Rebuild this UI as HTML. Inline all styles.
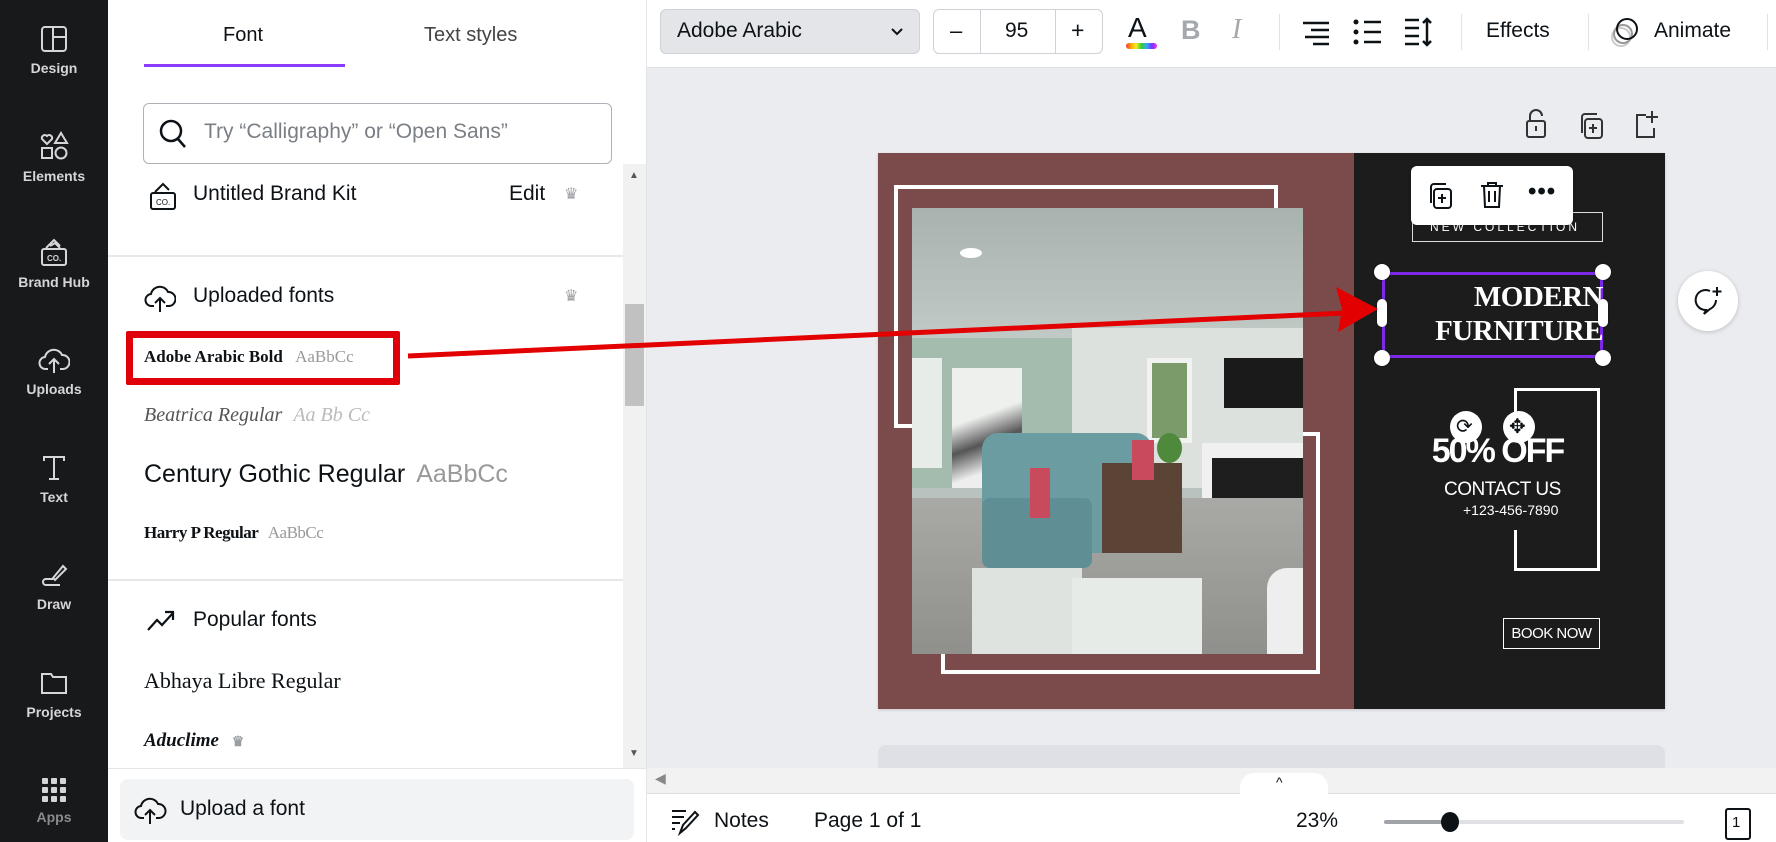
<!DOCTYPE html>
<html><head><meta charset="utf-8"><style>
*{margin:0;padding:0;box-sizing:border-box}
body{width:1776px;height:842px;position:relative;overflow:hidden;background:#ebecf0;font-family:"Liberation Sans",sans-serif;color:#0d1216}
.a{position:absolute}
.side{left:0;top:0;width:108px;height:842px;background:#18191b}
.si{position:absolute;left:0;width:108px;text-align:center;color:#d6d6d8;font-size:14px;font-weight:bold}
.si svg{display:block;margin:0 auto 6px}
.panel{left:108px;top:0;width:539px;height:842px;background:#fff;border-right:1px solid #e3e5e8}
.txt{white-space:nowrap}
.tb{left:647px;top:0;width:1129px;height:68px;background:#fff;border-bottom:1px solid #dfe1e5}
.sep{position:absolute;top:14px;width:1px;height:36px;background:#e0e2e6}
.hd{width:16px;height:16px;border-radius:50%;background:#fff;box-shadow:0 0 2px rgba(0,0,0,.4)}
</style></head><body>
<div class="a side">
 <div class="si" style="top:24px"><svg width="30" height="30" viewBox="0 0 30 30" fill="none" stroke="#d6d6d8" stroke-width="2"><rect x="3" y="3" width="24" height="24" rx="3"/><path d="M14 3v24M14 13h13"/></svg>Design</div>
 <div class="si" style="top:130px"><svg width="32" height="32" viewBox="0 0 32 32" fill="none" stroke="#d6d6d8" stroke-width="2"><path d="M9 14l-5-5a3 3 0 015-3 3 3 0 015 3z"/><path d="M23 3l6 10h-12z"/><rect x="4" y="18" width="10" height="10"/><circle cx="23" cy="23" r="5.5"/></svg>Elements</div>
 <div class="si" style="top:236px"><svg width="30" height="32" viewBox="0 0 30 32" fill="none" stroke="#d6d6d8" stroke-width="2"><rect x="3" y="13" width="24" height="16" rx="2"/><path d="M7 12l8-8 6 6M11 10l5-3 5 5"/><text x="8" y="25" font-size="8" fill="#d6d6d8" stroke="none" font-family="Liberation Sans">CO.</text></svg>Brand Hub</div>
 <div class="si" style="top:345px"><svg width="32" height="30" viewBox="0 0 32 30" fill="none" stroke="#d6d6d8" stroke-width="2"><path d="M10 24H8a6 6 0 01-1-12 9 9 0 0117-2 7 7 0 011 14h-3"/><path d="M16 28V14M11 19l5-5 5 5"/></svg>Uploads</div>
 <div class="si" style="top:453px"><svg width="30" height="30" viewBox="0 0 30 30" fill="none" stroke="#d6d6d8" stroke-width="2"><path d="M5 8V4h20v4M15 4v22M10 26h10"/></svg>Text</div>
 <div class="si" style="top:560px"><svg width="30" height="30" viewBox="0 0 30 30" fill="none" stroke="#d6d6d8" stroke-width="2"><path d="M14 18l10-12 3 3-11 11z"/><path d="M14 19H7a3 3 0 000 6h14"/></svg>Draw</div>
 <div class="si" style="top:668px"><svg width="30" height="30" viewBox="0 0 30 30" fill="none" stroke="#d6d6d8" stroke-width="2"><path d="M3 6h9l2 3h13v16H3z"/></svg>Projects</div>
 <div class="si" style="top:777px;color:#8a8b8e"><svg width="26" height="26" viewBox="0 0 26 26" fill="#d6d6d8"><rect x="1" y="1" width="6" height="6" rx="1"/><rect x="10" y="1" width="6" height="6" rx="1"/><rect x="19" y="1" width="6" height="6" rx="1"/><rect x="1" y="10" width="6" height="6" rx="1"/><rect x="10" y="10" width="6" height="6" rx="1"/><rect x="19" y="10" width="6" height="6" rx="1"/><rect x="1" y="19" width="6" height="6" rx="1"/><rect x="10" y="19" width="6" height="6" rx="1"/><rect x="19" y="19" width="6" height="6" rx="1"/></svg>Apps</div>
</div>
<div class="a panel">
 <div class="a txt" style="left:115px;top:24px;font-size:20px">Font</div>
 <div class="a txt" style="left:316px;top:24px;font-size:20px;color:#444">Text styles</div>
 <div class="a" style="left:36px;top:64px;width:201px;height:3px;background:#8b3dff"></div>
 <div class="a" style="left:35px;top:103px;width:469px;height:61px;border:1px solid #aeb2b8;border-radius:6px"></div>
 <svg class="a" style="left:50px;top:118px" width="30" height="32" viewBox="0 0 30 32" fill="none" stroke="#0d1216" stroke-width="2.5"><circle cx="13" cy="13" r="10"/><path d="M20 21l7 8"/></svg>
 <div class="a txt" style="left:96px;top:120px;font-size:21px;color:#7a7f85">Try “Calligraphy” or “Open Sans”</div>
 <svg class="a" style="left:40px;top:180px" width="30" height="32" viewBox="0 0 30 32" fill="none" stroke="#0d1216" stroke-width="2"><rect x="3" y="13" width="24" height="16" rx="2"/><path d="M7 12l8-8 6 6"/><text x="8" y="25" font-size="8" fill="#0d1216" stroke="none" font-family="Liberation Sans">CO.</text></svg>
 <div class="a txt" style="left:85px;top:182px;font-size:21px">Untitled Brand Kit</div>
 <div class="a txt" style="left:401px;top:182px;font-size:21px">Edit</div>
 <div class="a txt" style="left:456px;top:184px;font-size:16px;color:#9a9da1">♛</div>
 <div class="a" style="left:0;top:255px;width:515px;height:2px;background:#e6e8eb"></div>
 <svg class="a" style="left:36px;top:282px" width="32" height="32" viewBox="0 0 32 32" fill="none" stroke="#0d1216" stroke-width="2"><path d="M10 24H8a6 6 0 01-1-12 9 9 0 0117-2 7 7 0 011 14h-3"/><path d="M16 30V16M11 21l5-5 5 5"/></svg>
 <div class="a txt" style="left:85px;top:284px;font-size:21px">Uploaded fonts</div>
 <div class="a txt" style="left:456px;top:286px;font-size:16px;color:#9a9da1">♛</div>
 <div class="a" style="left:18px;top:331px;width:274px;height:54px;border:7px solid #e0000a;border-radius:2px"></div>
 <div class="a txt" style="left:36px;top:347px;font-size:17px;font-family:'Liberation Serif',serif;font-weight:bold">Adobe Arabic Bold <span style="color:#999;font-weight:normal;margin-left:8px">AaBbCc</span></div>
 <div class="a txt" style="left:36px;top:404px;font-size:20px;font-family:'Liberation Serif',serif;font-style:italic;color:#555">Beatrica Regular <span style="color:#bbb;margin-left:6px">Aa Bb Cc</span></div>
 <div class="a txt" style="left:36px;top:460px;font-size:25px">Century Gothic Regular <span style="color:#999;margin-left:4px">AaBbCc</span></div>
 <div class="a txt" style="left:36px;top:523px;font-size:17px;font-family:'Liberation Serif',serif;font-weight:bold;letter-spacing:-0.5px">Harry P Regular <span style="color:#999;font-weight:normal;margin-left:6px">AaBbCc</span></div>
 <div class="a" style="left:0;top:579px;width:515px;height:2px;background:#e6e8eb"></div>
 <svg class="a" style="left:38px;top:608px" width="30" height="24" viewBox="0 0 30 24" fill="none" stroke="#0d1216" stroke-width="2.2"><path d="M2 22l9-10 5 5 11-12M19 4h8v8"/></svg>
 <div class="a txt" style="left:85px;top:608px;font-size:21px">Popular fonts</div>
 <div class="a txt" style="left:36px;top:668px;font-size:22px;font-family:'Liberation Serif',serif">Abhaya Libre Regular</div>
 <div class="a txt" style="left:36px;top:730px;font-size:19px;font-family:'Liberation Serif',serif;font-style:italic;font-weight:bold">Aduclime <span style="color:#9a9da1;font-size:14px;font-style:normal;margin-left:8px">♛</span></div>
 <div class="a" style="left:515px;top:164px;width:23px;height:604px;background:#f1f1f1"></div>
 <div class="a" style="left:517px;top:304px;width:19px;height:102px;background:#c1c1c1"></div>
 <div class="a txt" style="left:521px;top:170px;font-size:10px;color:#555">▲</div>
 <div class="a txt" style="left:521px;top:748px;font-size:10px;color:#555">▼</div>
 <div class="a" style="left:0;top:768px;width:539px;height:1px;background:#e3e5e8"></div>
 <div class="a" style="left:12px;top:779px;width:514px;height:61px;background:#f2f3f5;border-radius:8px"></div>
 <svg class="a" style="left:25px;top:794px" width="34" height="32" viewBox="0 0 32 32" fill="none" stroke="#0d1216" stroke-width="2"><path d="M10 24H8a6 6 0 01-1-12 9 9 0 0117-2 7 7 0 011 14h-3"/><path d="M16 30V16M11 21l5-5 5 5"/></svg>
 <div class="a txt" style="left:72px;top:797px;font-size:21px">Upload a font</div>
</div>
<div class="a tb">
 <div class="a" style="left:13px;top:9px;width:260px;height:45px;background:#e3e5e8;border:1px solid #cfd2d6;border-radius:6px"></div>
 <div class="a txt" style="left:30px;top:19px;font-size:21px">Adobe Arabic</div>
 <svg class="a" style="left:243px;top:27px" width="14" height="10" viewBox="0 0 14 10" fill="none" stroke="#0d1216" stroke-width="2"><path d="M2 2l5 5 5-5"/></svg>
 <div class="a" style="left:286px;top:9px;width:170px;height:45px;border:1px solid #cfd2d6;border-radius:6px"></div>
 <div class="a" style="left:333px;top:10px;width:1px;height:43px;background:#cfd2d6"></div>
 <div class="a" style="left:408px;top:10px;width:1px;height:43px;background:#cfd2d6"></div>
 <div class="a txt" style="left:303px;top:18px;font-size:22px">–</div>
 <div class="a txt" style="left:358px;top:19px;font-size:21px">95</div>
 <div class="a txt" style="left:424px;top:17px;font-size:23px">+</div>
 <div class="a txt" style="left:481px;top:12px;font-size:28px">A</div>
 <div class="a" style="left:479px;top:43px;width:31px;height:6px;border-radius:3px;background:linear-gradient(90deg,#f33,#fa0,#ee2,#3c3,#3af,#73f,#e3e)"></div>
 <div class="a txt" style="left:534px;top:15px;font-size:27px;font-weight:bold;color:#a5a9ae">B</div>
 <div class="a txt" style="left:585px;top:14px;font-size:28px;font-style:italic;font-family:'Liberation Serif',serif;color:#a5a9ae">I</div>
 <div class="sep" style="left:632px"></div>
 <svg class="a" style="left:654px;top:20px" width="30" height="26" viewBox="0 0 30 26" stroke="#0d1216" stroke-width="2.5"><path d="M2 3h26M10 10h18M4 17h24M12 24h16"/></svg>
 <svg class="a" style="left:706px;top:18px" width="30" height="28" viewBox="0 0 30 28" fill="#0d1216" stroke="#0d1216" stroke-width="2.5"><circle cx="3" cy="4" r="2.5" stroke="none"/><circle cx="3" cy="14" r="2.5" stroke="none"/><circle cx="3" cy="24" r="2.5" stroke="none"/><path d="M11 4h17M11 14h17M11 24h17"/></svg>
 <svg class="a" style="left:756px;top:17px" width="30" height="30" viewBox="0 0 30 30" fill="none" stroke="#0d1216" stroke-width="2.5"><path d="M2 3h14M2 11h14M2 19h14M2 27h14M24 2v26M20 6l4-4 4 4M20 24l4 4 4-4"/></svg>
 <div class="sep" style="left:814px"></div>
 <div class="a txt" style="left:839px;top:19px;font-size:21px">Effects</div>
 <div class="sep" style="left:941px"></div>
 <svg class="a" style="left:962px;top:15px" width="34" height="34" viewBox="0 0 34 34" fill="none" stroke-width="2"><circle cx="12" cy="22" r="9" stroke="#ccc"/><circle cx="14" cy="19" r="9" stroke="#999"/><circle cx="18" cy="14" r="10" stroke="#0d1216"/></svg>
 <div class="a txt" style="left:1007px;top:19px;font-size:21px">Animate</div>
 <div class="sep" style="left:1120px"></div>
</div>
<svg class="a" style="left:1524px;top:108px" width="26" height="32" viewBox="0 0 26 32" fill="none" stroke="#333" stroke-width="2"><rect x="3" y="13" width="18" height="16" rx="2"/><path d="M6 13V8a6 6 0 0112 0M12 18v5"/></svg>
<svg class="a" style="left:1578px;top:111px" width="28" height="30" viewBox="0 0 28 30" fill="none" stroke="#333" stroke-width="2"><rect x="7" y="8" width="17" height="19" rx="3"/><path d="M4 22V6a3 3 0 013-3h12M15 13v9M11 17h8"/></svg>
<svg class="a" style="left:1632px;top:108px" width="28" height="32" viewBox="0 0 28 32" fill="none" stroke="#333" stroke-width="2"><path d="M14 7H5v22h17V20M20 3v12M14 9h12"/></svg>
<div class="a" style="left:878px;top:153px;width:787px;height:556px;background:#7b4b4b;box-shadow:0 1px 3px rgba(0,0,0,.15)"></div>
<div class="a" style="left:1354px;top:153px;width:311px;height:556px;background:#1c1c1c"></div>
<div class="a" style="left:894px;top:185px;width:384px;height:243px;border:4px solid #fff"></div>
<div class="a" style="left:941px;top:432px;width:379px;height:242px;border:4px solid #fff"></div>
<div class="a" style="left:912px;top:208px;width:391px;height:446px;overflow:hidden;background:#b8c2be">
 <div class="a" style="left:0;top:0;width:391px;height:150px;background:linear-gradient(180deg,#a8b2ae,#c5cdc9)"></div>
 <div class="a" style="left:48px;top:40px;width:22px;height:10px;border-radius:50%;background:#fff"></div>
 <div class="a" style="left:0;top:130px;width:160px;height:150px;background:#a3bcae"></div>
 <div class="a" style="left:0;top:150px;width:30px;height:110px;background:#e8ece9"></div>
 <div class="a" style="left:40px;top:160px;width:70px;height:120px;background:linear-gradient(160deg,#eef0ee 40%,#555 60%,#eee 80%)"></div>
 <div class="a" style="left:160px;top:120px;width:231px;height:160px;background:#dde1de"></div>
 <div class="a" style="left:235px;top:150px;width:45px;height:85px;background:#7c9b6a;border:5px solid #f2f2f2"></div>
 <div class="a" style="left:312px;top:150px;width:79px;height:50px;background:#1a1a1a"></div>
 <div class="a" style="left:290px;top:235px;width:101px;height:105px;background:#f0f0f0"></div>
 <div class="a" style="left:300px;top:250px;width:91px;height:85px;background:#1e1e1e"></div>
 <div class="a" style="left:0;top:290px;width:391px;height:156px;background:linear-gradient(180deg,#a9a9a6,#8f8f8c)"></div>
 <div class="a" style="left:70px;top:225px;width:170px;height:120px;border-radius:16px;background:#6b9ca2"></div>
 <div class="a" style="left:70px;top:290px;width:110px;height:70px;border-radius:8px;background:#5f8f95"></div>
 <div class="a" style="left:190px;top:255px;width:80px;height:90px;background:#5b4436"></div>
 <div class="a" style="left:60px;top:360px;width:110px;height:86px;background:#dfe3e0"></div>
 <div class="a" style="left:160px;top:370px;width:130px;height:76px;background:#e7ebe7"></div>
 <div class="a" style="left:355px;top:360px;width:36px;height:86px;background:#eee;border-radius:20px 0 0 0"></div>
 <div class="a" style="left:118px;top:260px;width:20px;height:50px;background:#c94a5d"></div>
 <div class="a" style="left:220px;top:232px;width:22px;height:40px;background:#c94a5d"></div>
 <div class="a" style="left:245px;top:225px;width:25px;height:30px;background:#4f8a3c;border-radius:50%"></div>
</div>
<div class="a" style="left:1412px;top:212px;width:191px;height:30px;border:1px solid #ddd"></div>
<div class="a txt" style="left:1430px;top:220px;font-size:12px;color:#fff;letter-spacing:3px">NEW COLLECTION</div>
<div class="a" style="left:1411px;top:166px;width:162px;height:59px;background:#fff;border-radius:6px;box-shadow:0 1px 4px rgba(0,0,0,.2)"></div>
<svg class="a" style="left:1427px;top:181px" width="28" height="30" viewBox="0 0 28 30" fill="none" stroke="#0d1216" stroke-width="2"><rect x="7" y="8" width="17" height="19" rx="3"/><path d="M4 22V6a3 3 0 013-3h12M15 13v9M11 17h8"/></svg>
<svg class="a" style="left:1479px;top:180px" width="26" height="30" viewBox="0 0 26 30" fill="none" stroke="#0d1216" stroke-width="2"><path d="M2 6h22M9 6V3h8v3M5 6l1 21h14l1-21M10 11v11M16 11v11"/></svg>
<div class="a txt" style="left:1528px;top:178px;font-size:24px;font-weight:bold;letter-spacing:1px">•••</div>
<div class="a" style="left:1382px;top:272px;width:221px;height:86px;border:3px solid #7d2ae8"></div>
<div class="a txt" style="left:1382px;top:280px;width:221px;text-align:right;font-family:'Liberation Serif',serif;font-weight:bold;font-size:29px;color:#fff;line-height:34px;letter-spacing:-0.5px">MODERN<br>FURNITURE</div>
<div class="a hd" style="left:1374px;top:264px"></div><div class="a hd" style="left:1595px;top:264px"></div>
<div class="a hd" style="left:1374px;top:350px"></div><div class="a hd" style="left:1595px;top:350px"></div>
<div class="a" style="left:1377px;top:299px;width:10px;height:28px;border-radius:5px;background:#fff;box-shadow:0 0 2px rgba(0,0,0,.4)"></div>
<div class="a" style="left:1598px;top:299px;width:10px;height:28px;border-radius:5px;background:#fff;box-shadow:0 0 2px rgba(0,0,0,.4)"></div>
<div class="a" style="left:1514px;top:388px;width:86px;height:183px;border:3px solid #fff;border-left:none"></div>
<div class="a" style="left:1514px;top:388px;width:3px;height:26px;background:#fff"></div>
<div class="a" style="left:1514px;top:530px;width:3px;height:40px;background:#fff"></div>
<div class="a txt" style="left:1420px;top:432px;width:155px;text-align:center;font-size:34px;font-weight:bold;color:#fff;letter-spacing:-2px">50% OFF</div>
<div class="a" style="left:1450px;top:411px;width:32px;height:32px;border-radius:50%;background:#fff"></div>
<div class="a txt" style="left:1456px;top:414px;font-size:20px">⟳</div>
<div class="a" style="left:1503px;top:411px;width:32px;height:32px;border-radius:50%;background:#fff"></div>
<div class="a txt" style="left:1509px;top:414px;font-size:20px">✥</div>
<div class="a txt" style="left:1444px;top:479px;font-size:19px;color:#fff;letter-spacing:-0.5px">CONTACT US</div>
<div class="a txt" style="left:1463px;top:502px;font-size:14px;color:#fff">+123-456-7890</div>
<div class="a" style="left:1503px;top:618px;width:97px;height:31px;border:1px solid #fff"></div>
<div class="a txt" style="left:1503px;top:625px;width:97px;text-align:center;font-size:15px;color:#fff;letter-spacing:-0.5px">BOOK NOW</div>
<div class="a" style="left:1678px;top:271px;width:60px;height:60px;border-radius:50%;background:#fff;box-shadow:0 1px 5px rgba(0,0,0,.2)"></div>
<svg class="a" style="left:1692px;top:285px" width="32" height="32" viewBox="0 0 32 32" fill="none" stroke="#0d1216" stroke-width="2"><path d="M18 6a10 10 0 10-4 19l-2 4 6-5a10 10 0 006-9"/><path d="M25 2v9M20.5 6.5h9"/></svg>
<div class="a" style="left:878px;top:745px;width:787px;height:30px;background:#dfe0e5;border-radius:8px 8px 0 0"></div>
<div class="a" style="left:647px;top:768px;width:1129px;height:26px;background:#f2f2f2;border-bottom:1px solid #ddd"></div>
<div class="a txt" style="left:655px;top:770px;font-size:14px;color:#888">◀</div>
<div class="a" style="left:1240px;top:773px;width:88px;height:25px;background:#fff;border-radius:14px 14px 0 0"></div>
<div class="a txt" style="left:1276px;top:774px;font-size:14px">^</div>
<div class="a" style="left:647px;top:794px;width:1129px;height:48px;background:#fff"></div>
<svg class="a" style="left:670px;top:808px" width="30" height="28" viewBox="0 0 30 28" fill="none" stroke="#0d1216" stroke-width="2"><path d="M2 3h14M2 9h12M2 15h8M2 21h3M10 25l3-8 12-13 3 3-12 13z"/></svg>
<div class="a txt" style="left:714px;top:809px;font-size:21px">Notes</div>
<div class="a txt" style="left:814px;top:809px;font-size:21px">Page 1 of 1</div>
<div class="a txt" style="left:1296px;top:809px;font-size:21px">23%</div>
<div class="a" style="left:1384px;top:820px;width:300px;height:4px;border-radius:2px;background:#dfe1e5"></div>
<div class="a" style="left:1384px;top:820px;width:66px;height:4px;border-radius:2px;background:#a0a4a9"></div>
<div class="a" style="left:1441px;top:812px;width:18px;height:20px;border-radius:50%;background:#0d1216"></div>
<div class="a" style="left:1725px;top:808px;width:26px;height:32px;border:2px solid #0d1216;border-radius:3px;background:#fff"></div>
<div class="a txt" style="left:1732px;top:814px;font-size:15px">1</div>
<svg class="a" style="left:0;top:0" width="1776" height="842" viewBox="0 0 1776 842"><path d="M408 356L1345 313" stroke="#e20000" stroke-width="5" fill="none"/><path d="M1378 309l-42-22 6 22-4 23z" fill="#e20000"/></svg>
</body></html>
